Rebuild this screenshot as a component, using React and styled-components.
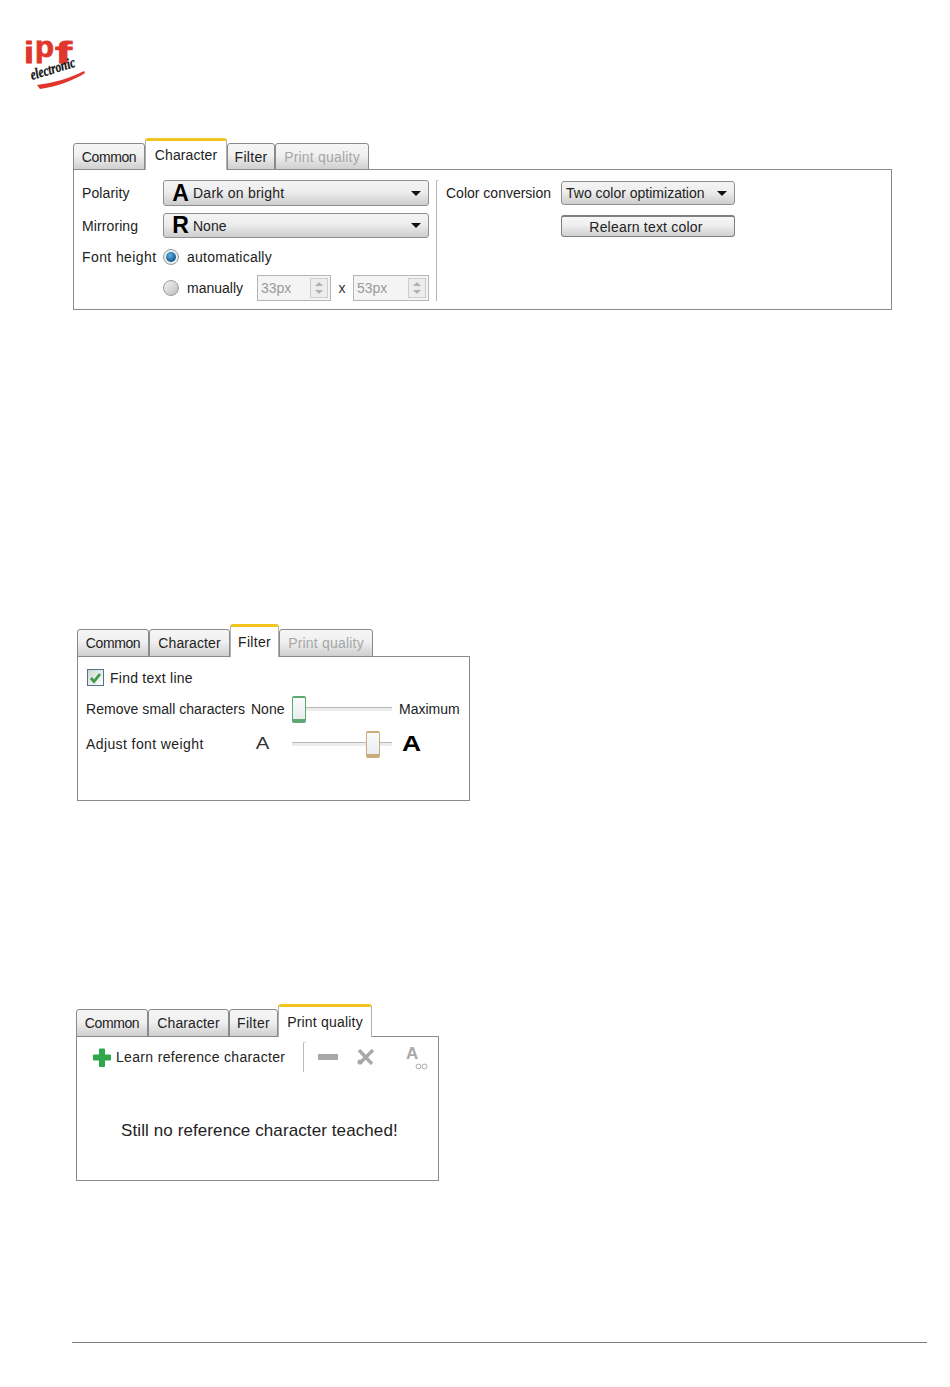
import React from 'react'
import styled, { createGlobalStyle } from 'styled-components'

const GlobalStyle = createGlobalStyle`
  html, body {
    margin: 0;
    padding: 0;
    background: #fff;
  }
  * {
    box-sizing: border-box;
  }
`

const Page = styled.div`
  width: 950px;
  height: 1387px;
  display: flex;
  flex-direction: column;
  overflow: hidden;
  font-family: "Liberation Sans", Arial, sans-serif;
  font-size: 14px;
  color: #222;
`

const Logo = styled.svg`
  display: block;
  margin: 40px 0 0 23px;
  width: 64px;
  height: 50px;
  flex: none;
  overflow: visible;
`

const Widget = styled.section`
  flex: none;
  margin-top: ${p => p.$top}px;
  margin-left: ${p => p.$left}px;
  width: ${p => p.$width}px;
`

const TabRow = styled.div`
  display: flex;
  align-items: flex-end;
  height: ${p => p.$height}px;
`

const Tab = styled.div`
  width: ${p => p.$width}px;
  height: ${p => (p.$active ? p.$rowHeight : p.$rowHeight - 5)}px;
  display: flex;
  align-items: center;
  justify-content: center;
  position: relative;
  z-index: ${p => (p.$active ? 2 : 1)};
  border: 1px solid #8a8a8a;
  border-bottom: ${p => (p.$active ? 'none' : '1px solid #8a8a8a')};
  border-top: ${p => (p.$active ? '3px solid #f3c41f' : '1px solid #8a8a8a')};
  border-left-color: ${p => (p.$active ? '#b0b0b0' : '#8a8a8a')};
  border-right-color: ${p => (p.$active ? '#b0b0b0' : '#8a8a8a')};
  border-radius: 3px 3px 0 0;
  background: ${p => (p.$active ? '#fff' : 'linear-gradient(#f6f6f6, #f0f0f0 45%, #cfcfcf)')};
  color: ${p => (p.$disabled ? '#a6a6a6' : '#222')};
  letter-spacing: ${p => p.$spacing}px;
  padding-bottom: ${p => (p.$active ? 1 : 0)}px;
  white-space: nowrap;
`

const Panel = styled.div`
  height: ${p => p.$height}px;
  border: 1px solid #8a8a8a;
  background: #fff;
  margin-top: -1px;
`

const CharacterBody = styled.div`
  display: flex;
  align-items: flex-start;
  padding: 10px 0 0 8px;
`

const FieldColumn = styled.div`
  width: 347px;
`

const FieldRow = styled.div`
  display: flex;
  align-items: center;
  height: ${p => p.$height || 26}px;
  margin-top: ${p => p.$top || 0}px;
`

const FieldLabel = styled.div`
  width: 81px;
  flex: none;
  letter-spacing: ${p => p.$spacing || 0}px;
  white-space: nowrap;
`

const Divider = styled.div`
  width: 3px;
  height: 121px;
  margin-left: 7px;
  border-left: 1px solid #b5b5b5;
  border-top: 1px solid #d8d8d8;
`

const ColorGrid = styled.div`
  display: grid;
  grid-template-columns: 115px 174px;
  grid-template-rows: 24px 22px;
  row-gap: 10px;
  margin: 1px 0 0 7px;
  align-items: center;
`

const Label = styled.div`
  white-space: nowrap;
`

const DropBox = styled.div`
  flex: 1;
  display: flex;
  align-items: center;
  height: ${p => p.$height || 26}px;
  padding: 0 7px 0 4px;
  border: 1px solid #8f8f8f;
  border-radius: 3px;
  background: linear-gradient(#f4f4f4, #ededed 45%, #cdcdcd);
  white-space: nowrap;
`

const Glyph = styled.span`
  width: 25px;
  flex: none;
  font-size: 23px;
  font-weight: 700;
  color: #000;
  line-height: 1;
  text-align: center;
`

const DropText = styled.span`
  flex: 1;
  letter-spacing: ${p => p.$spacing || 0}px;
`

const Caret = styled.span`
  flex: none;
  width: 0;
  height: 0;
  border-left: 5px solid transparent;
  border-right: 5px solid transparent;
  border-top: 5px solid #111;
`

const PushButton = styled.div`
  height: 22px;
  display: flex;
  align-items: center;
  justify-content: center;
  padding-right: 4px;
  letter-spacing: 0.2px;
  border: 1px solid #808080;
  border-top-width: 2px;
  border-radius: 3px;
  background: linear-gradient(#f6f6f6, #eee 45%, #cfcfcf);
`

const RadioRow = styled.div`
  display: flex;
  align-items: center;
`

const Radio = styled.span`
  width: 16px;
  height: 16px;
  flex: none;
  border-radius: 50%;
  border: 1px solid #9a9a9a;
  display: flex;
  align-items: center;
  justify-content: center;
  background: ${p => (p.$checked ? '#e6eef4' : 'linear-gradient(135deg, #f4f4f4, #bdbdbd)')};
  &::after {
    content: '';
    display: ${p => (p.$checked ? 'block' : 'none')};
    width: 10px;
    height: 10px;
    border-radius: 50%;
    background: radial-gradient(circle at 40% 35%, #5fb3df, #14598d 70%);
  }
`

const RadioText = styled.span`
  margin-left: 8px;
  width: ${p => (p.$fixed ? '70px' : 'auto')};
  letter-spacing: ${p => (p.$fixed ? 0 : 0.25)}px;
  white-space: nowrap;
`

const SpinBox = styled.div`
  width: ${p => p.$width}px;
  height: 26px;
  display: flex;
  align-items: center;
  justify-content: space-between;
  border: 1px solid #b5b5b5;
  background: #f4f4f4;
  color: #9a9a9a;
  padding: 0 2px 0 3px;
`

const SpinArrows = styled.span`
  width: 18px;
  height: 20px;
  display: flex;
  flex-direction: column;
  align-items: center;
  justify-content: space-evenly;
  border: 1px solid #cdcdcd;
  background: #ececec;
`

const SpinArrow = styled.span`
  width: 0;
  height: 0;
  border-left: 4px solid transparent;
  border-right: 4px solid transparent;
  border-bottom: ${p => (p.$down ? 'none' : '4px solid #b0b0b0')};
  border-top: ${p => (p.$down ? '4px solid #b0b0b0' : 'none')};
`

const Times = styled.span`
  width: 22px;
  text-align: center;
  color: #333;
`

const FilterBody = styled.div`
  padding: 12px 0 0 8px;
`

const CheckRow = styled.div`
  display: flex;
  align-items: center;
  height: 17px;
  margin-left: 1px;
  letter-spacing: 0.25px;
`

const CheckBox = styled.span`
  width: 17px;
  height: 17px;
  border: 1px solid #54708c;
  background: linear-gradient(135deg, #cfd8cf, #fff);
  display: flex;
  align-items: center;
  justify-content: center;
  margin-right: 6px;
`

const SliderRow = styled.div`
  display: grid;
  grid-template-columns: 165px 41px 100px auto;
  align-items: center;
  height: 28px;
  margin-top: ${p => p.$top}px;
  white-space: nowrap;
`

const RowLabel = styled.span`
  letter-spacing: ${p => p.$spacing || 0}px;
`

const Track = styled.div`
  height: 28px;
  position: relative;
  &::before {
    content: '';
    position: absolute;
    left: 0;
    right: 0;
    top: 12px;
    height: 3px;
    background: #ececec;
    border-top: 1px solid #b8b8b8;
  }
`

const Thumb = styled.div`
  position: absolute;
  top: 1px;
  left: ${p => p.$left}px;
  width: 14px;
  height: 27px;
  border-radius: 2px;
  border: 1px solid ${p => p.$edge};
  border-top-width: 2px;
  border-bottom-width: 4px;
  background: linear-gradient(#fafafa, #e9edf0);
`

const EndLabel = styled.span`
  margin-left: 7px;
`

const WeightGlyph = styled.span`
  display: inline-block;
  font-size: ${p => (p.$bold ? 22 : 17)}px;
  font-weight: ${p => (p.$bold ? 700 : 400)};
  color: ${p => (p.$bold ? '#000' : '#333')};
  transform: scaleX(1.2);
  margin-left: ${p => p.$left}px;
`

const Toolbar = styled.div`
  display: flex;
  align-items: center;
  height: 36px;
  margin-top: 2px;
  padding-left: 16px;
`

const ToolText = styled.span`
  margin-left: 5px;
  width: 187px;
  letter-spacing: 0.33px;
  white-space: nowrap;
`

const ToolSep = styled.div`
  width: 3px;
  height: 30px;
  border-left: 1px solid #bbb;
  border-top: 1px solid #d8d8d8;
`

const ToolIcon = styled.svg`
  display: block;
  flex: none;
  margin-left: ${p => p.$left || 0}px;
`

const LensGlyph = styled.span`
  position: relative;
  margin-left: 31px;
  width: 22px;
  height: 26px;
  color: #a9a9a9;
  font-size: 17px;
  font-weight: 700;
`

const Glasses = styled.svg`
  position: absolute;
  right: 0;
  bottom: 0;
`

const EmptyNote = styled.div`
  margin-top: 46px;
  padding-left: 44px;
  font-size: 17px;
  letter-spacing: 0.1px;
  white-space: nowrap;
  color: #222;
`

const FooterRule = styled.div`
  flex: none;
  margin-top: 161px;
  margin-left: 72px;
  width: 855px;
  height: 1px;
  background: #7f7f7f;
`

const tabs = [
  { name: 'Common', spacing: -0.4 },
  { name: 'Character', spacing: 0.1 },
  { name: 'Filter', spacing: 0.3 },
  { name: 'Print quality', spacing: 0.2 },
]

function TabWidget({ top, left, width, tabWidths, active, printDisabled, rowHeight, panelHeight, children }) {
  return (
    <Widget $top={top} $left={left} $width={width}>
      <TabRow $height={rowHeight}>
        {tabs.map((tab, i) => (
          <Tab
            key={tab.name}
            $width={tabWidths[i]}
            $rowHeight={rowHeight}
            $active={i === active}
            $spacing={tab.spacing}
            $disabled={printDisabled && tab.name === 'Print quality'}
          >
            {tab.name}
          </Tab>
        ))}
      </TabRow>
      <Panel $height={panelHeight}>{children}</Panel>
    </Widget>
  )
}

function Spin({ width, value }) {
  return (
    <SpinBox $width={width}>
      {value}
      <SpinArrows>
        <SpinArrow />
        <SpinArrow $down />
      </SpinArrows>
    </SpinBox>
  )
}

function LogoMark() {
  const red = '#e0362c'
  return (
    <Logo viewBox="0 0 64 50">
      <g fontFamily="Liberation Sans" fontWeight="700" fontSize="30" fill={red} stroke={red} strokeWidth="0.8">
        <text x="1" y="23" textLength="10" lengthAdjust="spacingAndGlyphs">i</text>
        <text x="12" y="17" textLength="19" lengthAdjust="spacingAndGlyphs">p</text>
        <text x="32" y="23" textLength="17" lengthAdjust="spacingAndGlyphs">f</text>
      </g>
      <text x="9" y="40" transform="rotate(-17 9 40)" fontFamily="Liberation Serif" fontStyle="italic" fontWeight="700" fontSize="15" fill="#111" stroke="#111" strokeWidth="0.3" textLength="46" lengthAdjust="spacingAndGlyphs">electronic</text>
      <path d="M14 45 C30 43 48 38 61 31 L62 33 C50 41 32 47 17 49 Z" fill={red} />
    </Logo>
  )
}

export default function App() {
  return (
    <Page>
      <GlobalStyle />
      <LogoMark />

      <TabWidget top={48} left={73} width={819} tabWidths={[72, 82, 48, 94]} active={1} printDisabled rowHeight={32} panelHeight={141}>
        <CharacterBody>
          <FieldColumn>
            <FieldRow>
              <FieldLabel $spacing={0.1}>Polarity</FieldLabel>
              <DropBox>
                <Glyph>A</Glyph>
                <DropText $spacing={0.25}>Dark on bright</DropText>
                <Caret />
              </DropBox>
            </FieldRow>
            <FieldRow $top={7} $height={25}>
              <FieldLabel $spacing={0.1}>Mirroring</FieldLabel>
              <DropBox $height={25}>
                <Glyph>R</Glyph>
                <DropText>None</DropText>
                <Caret />
              </DropBox>
            </FieldRow>
            <FieldRow $top={6}>
              <FieldLabel $spacing={0.4}>Font height</FieldLabel>
              <RadioRow>
                <Radio $checked />
                <RadioText>automatically</RadioText>
              </RadioRow>
            </FieldRow>
            <FieldRow $top={5}>
              <FieldLabel />
              <RadioRow>
                <Radio />
                <RadioText $fixed>manually</RadioText>
                <Spin width={74} value="33px" />
                <Times>x</Times>
                <Spin width={76} value="53px" />
              </RadioRow>
            </FieldRow>
          </FieldColumn>
          <Divider />
          <ColorGrid>
            <Label>Color conversion</Label>
            <DropBox $height={24}>
              <DropText>Two color optimization</DropText>
              <Caret />
            </DropBox>
            <span />
            <PushButton>Relearn text color</PushButton>
          </ColorGrid>
        </CharacterBody>
      </TabWidget>

      <TabWidget top={314} left={77} width={393} tabWidths={[72, 81, 49, 94]} active={2} printDisabled rowHeight={33} panelHeight={145}>
        <FilterBody>
          <CheckRow>
            <CheckBox>
              <svg width="13" height="13" viewBox="0 0 13 13">
                <path d="M2 7 L5 10.5 L11 3" fill="none" stroke="#3f9a4c" strokeWidth="2.8" />
              </svg>
            </CheckBox>
            Find text line
          </CheckRow>
          <SliderRow $top={9}>
            <RowLabel $spacing={0.05}>Remove small characters</RowLabel>
            <span>None</span>
            <Track>
              <Thumb $left={0} $edge="#5fa874" />
            </Track>
            <EndLabel>Maximum</EndLabel>
          </SliderRow>
          <SliderRow $top={7}>
            <RowLabel $spacing={0.4}>Adjust font weight</RowLabel>
            <WeightGlyph $left={8}>A</WeightGlyph>
            <Track>
              <Thumb $left={74} $edge="#c9ab7c" />
            </Track>
            <WeightGlyph $bold $left={16}>A</WeightGlyph>
          </SliderRow>
        </FilterBody>
      </TabWidget>

      <TabWidget top={203} left={76} width={363} tabWidths={[72, 81, 49, 94]} active={3} rowHeight={33} panelHeight={145}>
        <Toolbar>
          <svg width="18" height="19" viewBox="0 0 18 19">
            <path d="M6.5 1 H11.5 V7 H17.5 V12 H11.5 V18.5 H6.5 V12 H0.5 V7 H6.5 Z" fill="#2fa84a" stroke="#2fa84a" strokeLinejoin="round" />
          </svg>
          <ToolText>Learn reference character</ToolText>
          <ToolSep />
          <ToolIcon $left={12} width="20" height="6" viewBox="0 0 20 6">
            <rect width="20" height="6" rx="1" fill="#a8a8a8" />
          </ToolIcon>
          <ToolIcon $left={19} width="18" height="16" viewBox="0 0 18 16">
            <path d="M2 1 L15 15 M16 1 L4 13" fill="none" stroke="#a8a8a8" strokeWidth="3.4" />
            <circle cx="3" cy="13" r="2.6" fill="#a8a8a8" />
          </ToolIcon>
          <LensGlyph>
            A
            <Glasses width="13" height="7" viewBox="0 0 13 7">
              <circle cx="3.5" cy="3.5" r="2.4" fill="none" stroke="#a9a9a9" />
              <circle cx="9.5" cy="3.5" r="2.4" fill="none" stroke="#a9a9a9" />
            </Glasses>
          </LensGlyph>
        </Toolbar>
        <EmptyNote>Still no reference character teached!</EmptyNote>
      </TabWidget>

      <FooterRule />
    </Page>
  )
}
